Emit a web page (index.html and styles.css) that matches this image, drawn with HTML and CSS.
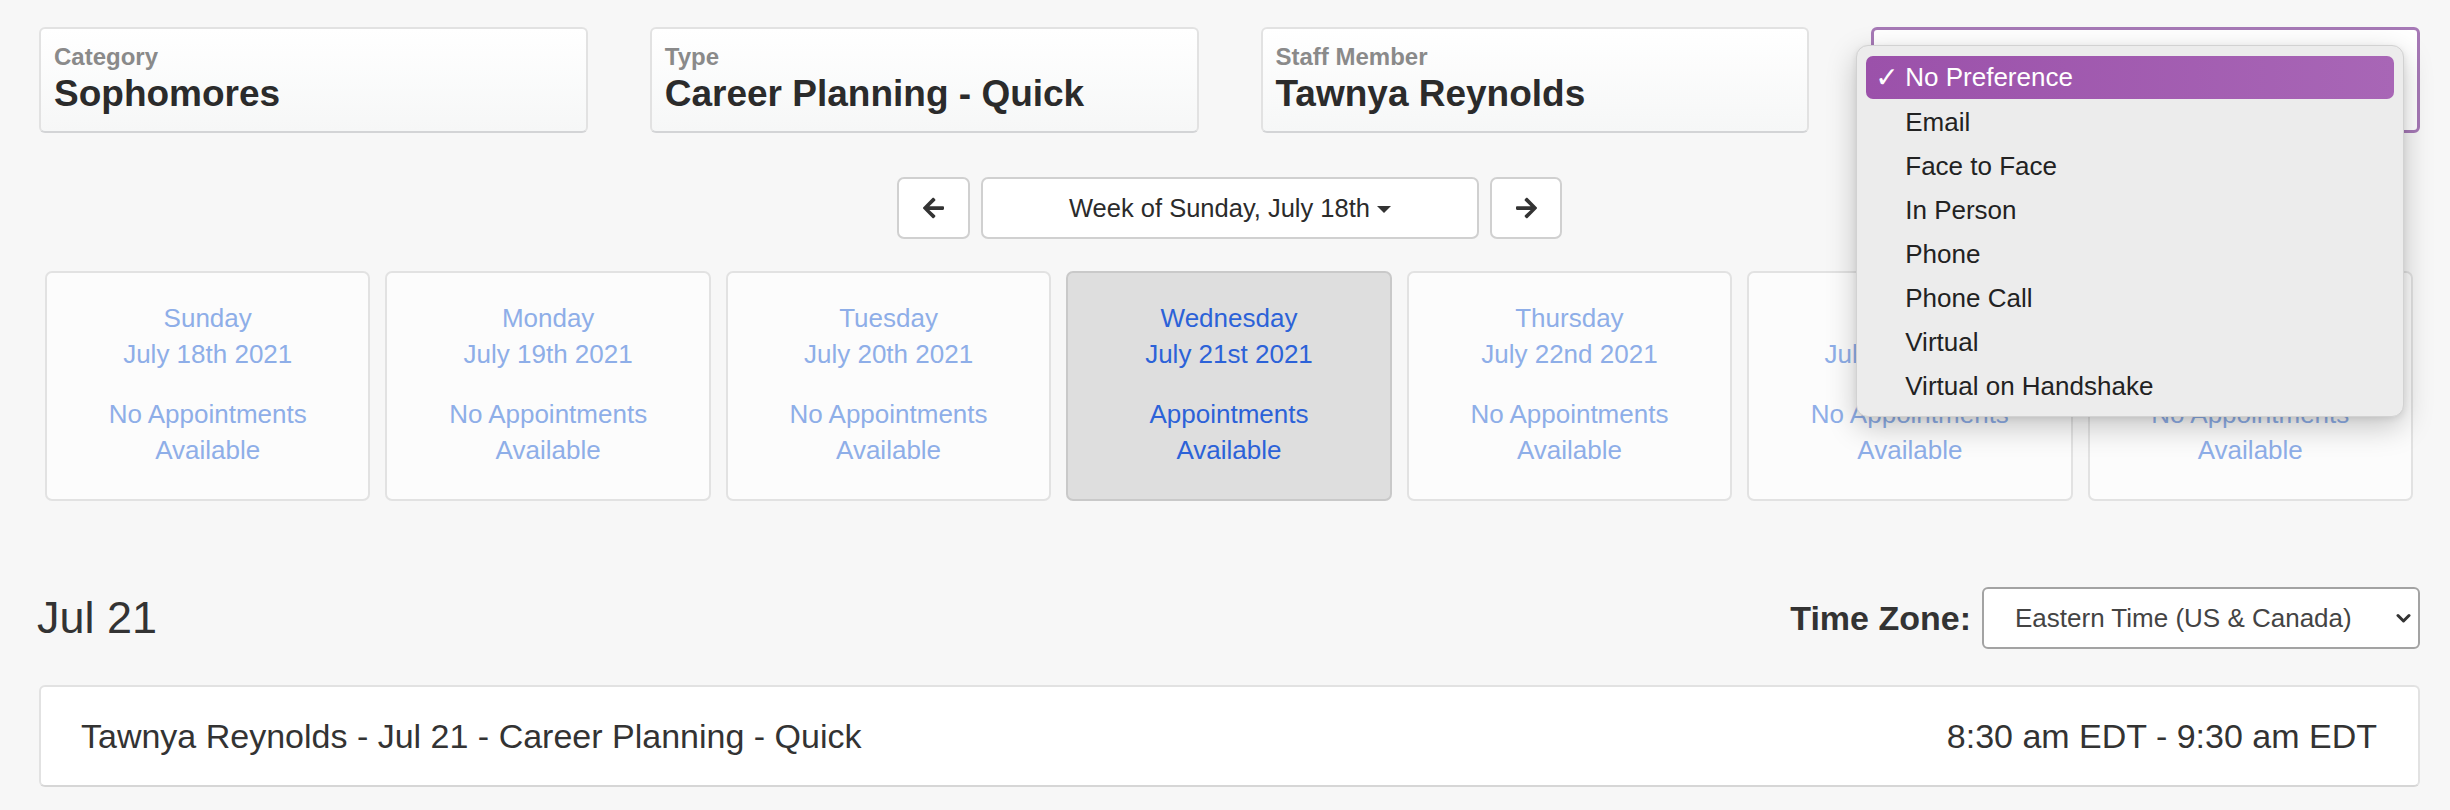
FILE: index.html
```html
<!DOCTYPE html>
<html lang="en">
<head>
<meta charset="utf-8">
<title>Schedule Appointment</title>
<link rel="stylesheet" href="styles.css">
</head>
<body>
<div class="page">
  <div class="filters">
    <div class="filter">
      <div class="flabel">Category</div>
      <div class="fvalue">Sophomores</div>
    </div>
    <div class="filter">
      <div class="flabel">Type</div>
      <div class="fvalue">Career Planning - Quick</div>
    </div>
    <div class="filter">
      <div class="flabel">Staff Member</div>
      <div class="fvalue">Tawnya Reynolds</div>
    </div>
    <div class="filter filter-focus">
      <div class="menu">
        <div class="opt opt-sel"><span class="check">✓</span>No Preference</div>
        <div class="opt"><span class="check"></span>Email</div>
        <div class="opt"><span class="check"></span>Face to Face</div>
        <div class="opt"><span class="check"></span>In Person</div>
        <div class="opt"><span class="check"></span>Phone</div>
        <div class="opt"><span class="check"></span>Phone Call</div>
        <div class="opt"><span class="check"></span>Virtual</div>
        <div class="opt"><span class="check"></span>Virtual on Handshake</div>
      </div>
    </div>
  </div>

  <div class="weeknav">
    <div class="navbtn navbtn-l">
      <svg width="21" height="24" viewBox="0 0 448 512"><path fill="#333" d="M257.5 445.1l-22.2 22.2c-9.4 9.4-24.6 9.4-33.9 0L7 273c-9.4-9.4-9.4-24.6 0-33.9L201.4 44.7c9.4-9.4 24.6-9.4 33.9 0l22.2 22.2c9.5 9.5 9.3 25-.4 34.3L136.6 216H424c13.3 0 24 10.7 24 24v32c0 13.3-10.7 24-24 24H136.6l120.5 114.8c9.8 9.3 10 24.8.4 34.3z"/></svg>
    </div>
    <div class="weekbtn">Week of Sunday, July 18th<span class="caret"></span></div>
    <div class="navbtn navbtn-r">
      <svg width="21" height="24" viewBox="0 0 448 512"><path fill="#333" d="M190.5 66.9l22.2-22.2c9.4-9.4 24.6-9.4 33.9 0L441 239c9.4 9.4 9.4 24.6 0 33.9L246.6 467.3c-9.4 9.4-24.6 9.4-33.9 0l-22.2-22.2c-9.5-9.5-9.3-25 .4-34.3L311.4 296H24c-13.3 0-24-10.7-24-24v-32c0-13.3 10.7-24 24-24h287.4L190.9 101.2c-9.8-9.3-10-24.8-.4-34.3z"/></svg>
    </div>
  </div>

  <div class="days">
    <div class="day">
      <div class="dday">Sunday<br>July 18th 2021</div>
      <div class="dstat">No Appointments<br>Available</div>
    </div>
    <div class="day">
      <div class="dday">Monday<br>July 19th 2021</div>
      <div class="dstat">No Appointments<br>Available</div>
    </div>
    <div class="day">
      <div class="dday">Tuesday<br>July 20th 2021</div>
      <div class="dstat">No Appointments<br>Available</div>
    </div>
    <div class="day day-active">
      <div class="dday">Wednesday<br>July 21st 2021</div>
      <div class="dstat">Appointments<br>Available</div>
    </div>
    <div class="day">
      <div class="dday">Thursday<br>July 22nd 2021</div>
      <div class="dstat">No Appointments<br>Available</div>
    </div>
    <div class="day">
      <div class="dday">Friday<br>July 23rd 2021</div>
      <div class="dstat">No Appointments<br>Available</div>
    </div>
    <div class="day">
      <div class="dday">Saturday<br>July 24th 2021</div>
      <div class="dstat">No Appointments<br>Available</div>
    </div>
  </div>

  <div class="dayhead">
    <h2 class="dtitle">Jul 21</h2>
    <div class="tz">
      <span class="tzlabel">Time Zone:</span>
      <div class="tzselect">
        <span>Eastern Time (US &amp; Canada)</span>
        <svg width="15" height="11" viewBox="0 0 15 11"><polyline points="2,2.5 7.5,8 13,2.5" fill="none" stroke="#333" stroke-width="3" stroke-linecap="round" stroke-linejoin="round"/></svg>
      </div>
    </div>
  </div>

  <div class="appt">
    <span>Tawnya Reynolds - Jul 21 - Career Planning - Quick</span>
    <span>8:30 am EDT - 9:30 am EDT</span>
  </div>
</div>
</body>
</html>
```

FILE: styles.css
```css
* { box-sizing: border-box; }

html, body {
  margin: 0;
  padding: 0;
  background: #f7f7f7;
}

body {
  font-family: "Liberation Sans", Arial, sans-serif;
  color: #333;
  width: 2450px;
  height: 810px;
  overflow: hidden;
}

.page {
  padding: 27px 30px 0 39px;
}

/* Filter cards */
.filters {
  display: grid;
  grid-template-columns: repeat(4, 1fr);
  column-gap: 62px;
}

.filter {
  height: 106px;
  border: 2px solid #e2e2e2;
  border-bottom-color: #d3d4d6;
  border-radius: 6px;
  background: linear-gradient(#ffffff, #f6f7f7);
  padding: 14px 13px 0 13px;
}

.flabel {
  font-size: 24px;
  line-height: 28px;
  font-weight: bold;
  color: #8a8a8a;
}

.fvalue {
  margin-top: 2px;
  font-size: 37px;
  line-height: 42px;
  font-weight: bold;
  color: #2b2b2b;
}

.filter-focus {
  position: relative;
  border: 3px solid #a679b6;
  background: #ffffff;
}

.menu {
  position: absolute;
  left: -18px;
  top: 15px;
  width: 548px;
  height: 372px;
  background: #ececec;
  border: 1px solid #d2d2d2;
  border-radius: 12px;
  box-shadow: 0 10px 30px rgba(0, 0, 0, 0.22), 0 2px 6px rgba(0, 0, 0, 0.08);
  padding: 10px 9px 8px 9px;
  z-index: 10;
}

.opt {
  display: flex;
  align-items: center;
  height: 44px;
  font-size: 26px;
  color: #222;
  padding-left: 9px;
  border-radius: 7px;
}

.opt-sel {
  background: linear-gradient(90deg, #9b51aa, #a866b6);
  color: #ffffff;
  height: 43px;
  margin-bottom: 1px;
}

.check {
  display: inline-block;
  width: 30px;
  font-family: "DejaVu Sans", sans-serif;
  font-size: 28px;
  line-height: 1;
}

/* Week navigation */
.weeknav {
  display: flex;
  justify-content: center;
  gap: 11px;
  margin-top: 44px;
}

.navbtn, .weekbtn {
  height: 62px;
  background: #ffffff;
  border: 2px solid #d0d0d0;
  border-radius: 7px;
  display: flex;
  align-items: center;
  justify-content: center;
}

.navbtn { width: 73px; }
.navbtn-r { width: 72px; }

.weekbtn {
  width: 498px;
  font-size: 25.5px;
  color: #2b2b2b;
}

.caret {
  display: inline-block;
  margin-left: 7px;
  margin-top: 3px;
  width: 0;
  height: 0;
  border-left: 7.5px solid transparent;
  border-right: 7.5px solid transparent;
  border-top: 7px solid #333;
}

/* Days */
.days {
  display: grid;
  grid-template-columns: repeat(7, 1fr);
  column-gap: 15px;
  margin-top: 32px;
  padding: 0 7px 0 6px;
}

.day {
  height: 230px;
  background: #fcfcfc;
  border: 2px solid #e2e2e2;
  border-radius: 7px;
  padding-top: 27px;
  text-align: center;
  font-size: 26px;
  line-height: 36px;
  color: #8eaee8;
}

.dday { margin-bottom: 24px; }

.day-active {
  background: #dedede;
  border-color: #c9c9c9;
  color: #2c62d8;
}

/* Heading row */
.dayhead {
  display: flex;
  justify-content: space-between;
  align-items: center;
  margin-top: 86px;
  height: 62px;
}

.dtitle {
  margin: 0 0 0 -2px;
  font-size: 45px;
  font-weight: normal;
  color: #333;
}

.tz {
  display: flex;
  align-items: center;
}

.tzlabel {
  font-size: 34px;
  font-weight: bold;
  color: #333;
  margin-right: 11px;
}

.tzselect {
  width: 438px;
  height: 62px;
  background: #ffffff;
  border: 2px solid #a3a3a3;
  border-radius: 6px;
  display: flex;
  align-items: center;
  justify-content: space-between;
  padding: 0 7px 0 31px;
  font-size: 26px;
  color: #444;
}

/* Appointment */
.appt {
  margin-top: 36px;
  height: 102px;
  background: #ffffff;
  border: 2px solid #e2e2e2;
  border-bottom-color: #d6d6d6;
  border-radius: 6px;
  display: flex;
  justify-content: space-between;
  align-items: center;
  padding: 0 41px 0 40px;
  font-size: 34px;
  color: #333;
}
```
